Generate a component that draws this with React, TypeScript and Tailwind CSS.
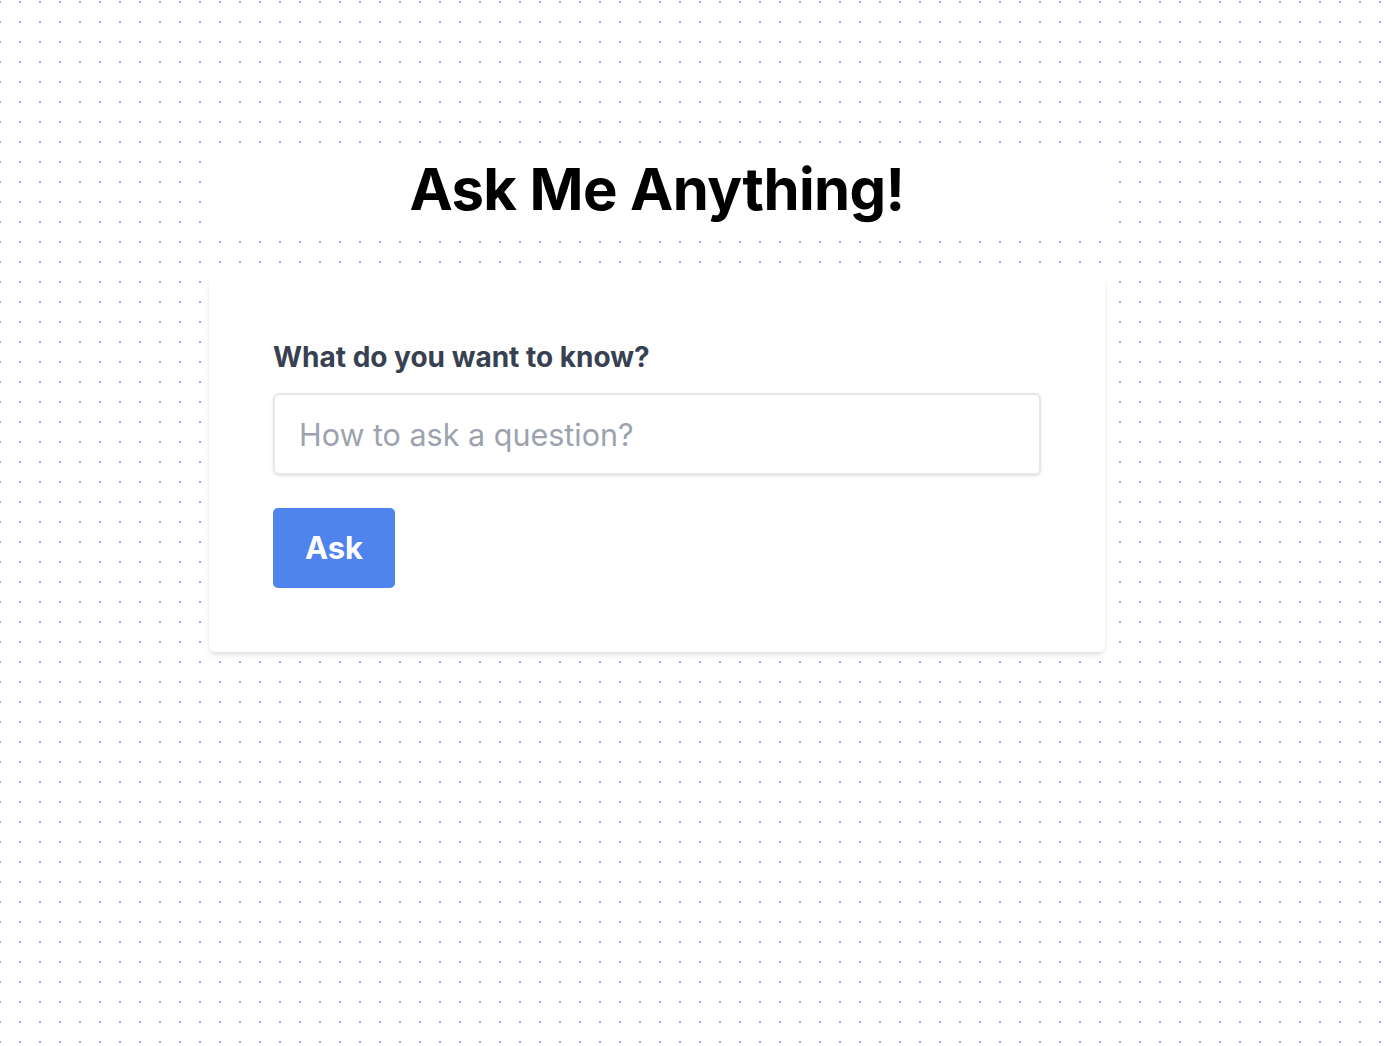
import React from "react";

export default function App() {
  return (
    <div
      className="min-h-[1046px] w-full bg-white bg-[conic-gradient(from_270deg_at_2px_2px,#a3a3f7_90deg,transparent_0)] bg-[size:20px_20px] bg-[position:19px_1px] pt-[150px]"
      style={{ fontFamily: "Inter, 'Noto Sans', sans-serif" }}
    >
      <div className="ml-[209px] w-[896px]">
        <div className="flex h-[90px] items-center justify-center bg-white pb-[12px]">
          <h1 className="text-[58px] font-bold leading-none tracking-[-0.6px] text-black">
            Ask Me Anything!
          </h1>
        </div>
        <div className="mt-[37px] rounded-md bg-white px-16 py-16 shadow-md">
          <label className="block text-[28px] font-bold leading-8 text-[#374151]">
            What do you want to know?
          </label>
          <input
            type="text"
            placeholder="How to ask a question?"
            className="mt-[20px] h-[82px] w-full rounded-md border-2 border-[#e5e7eb] px-6 text-[30.5px] text-[#374151] shadow-sm outline-none placeholder:text-[#9ca3af]"
          />
          <button className="mt-[33px] h-[80px] w-[122px] rounded-[5px] bg-[#4f83ee] text-[31px] font-bold text-white">
            Ask
          </button>
        </div>
      </div>
    </div>
  );
}
